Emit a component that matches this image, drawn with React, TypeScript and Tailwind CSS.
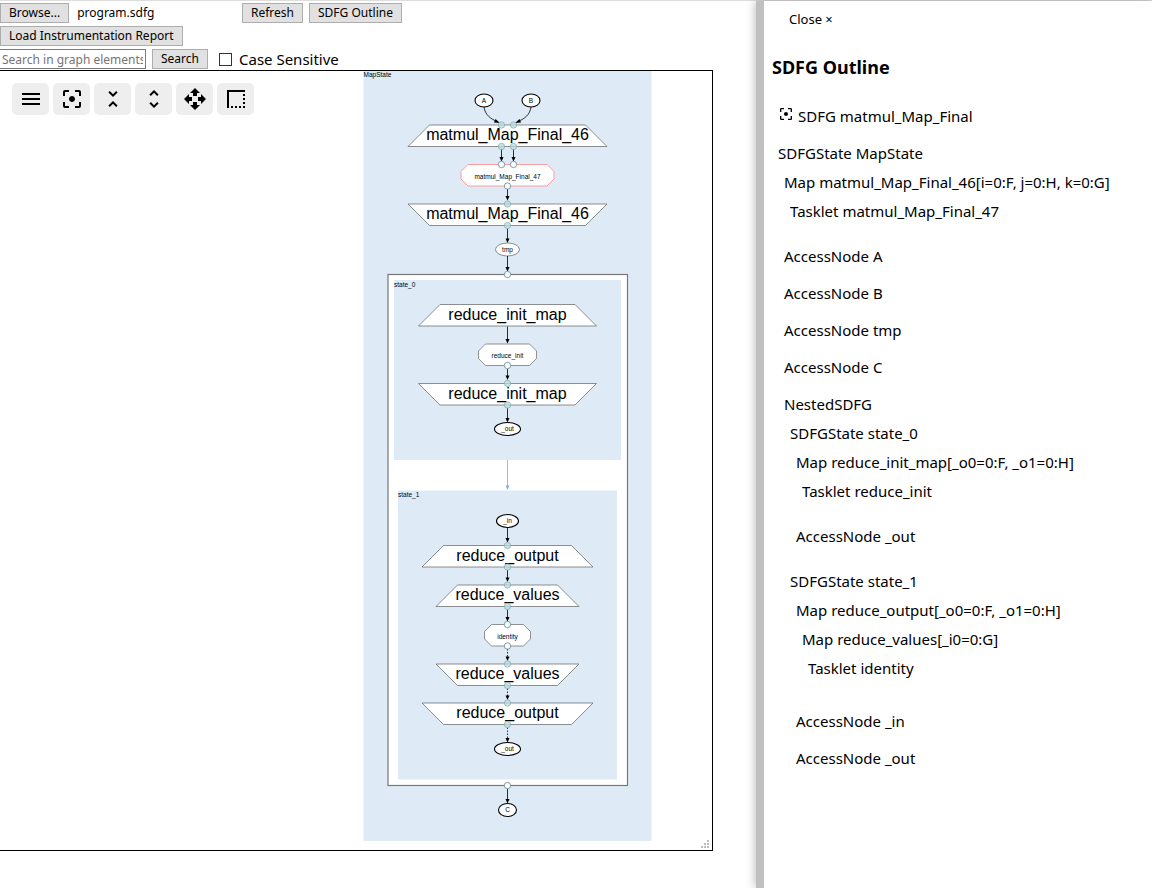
import { useRef } from "react";
import type { ReactNode } from "react";
import {
  MdBorderStyle,
  MdFilterCenterFocus,
  MdMenu,
  MdOpenWith,
  MdUnfoldLess,
  MdUnfoldMore,
} from "react-icons/md";

const CX = 1015;
const DEPTH = 43;

type MapProps = { y: number; wide: number; label: string; exit?: boolean };

function Port({ x = CX, y, solid = false }: { x?: number; y: number; solid?: boolean }) {
  return (
    <circle
      cx={x}
      cy={y}
      r={6.4}
      fill={solid ? "#f0ffff" : "#b9dbe0"}
      fillOpacity={solid ? 1 : 0.75}
      stroke={solid ? "#4d5c5e" : "#7d9da3"}
      strokeWidth={1.2}
    />
  );
}

function MapNode({ y, wide, label, exit = false }: MapProps) {
  const narrow = wide - DEPTH;
  const top = exit ? wide : narrow;
  const bottom = exit ? narrow : wide;
  return (
    <>
      <polygon
        points={`${CX - top},${y} ${CX + top},${y} ${CX + bottom},${y + DEPTH} ${CX - bottom},${y + DEPTH}`}
        fill="#fff"
        stroke="#555"
        strokeWidth={1.3}
      />
      <text x={CX} y={y + 30} fontSize={32} textAnchor="middle">
        {label}
      </text>
    </>
  );
}

function Tasklet({ y, half, label, stroke = "#666" }: { y: number; half: number; label: string; stroke?: string }) {
  const l = CX - half;
  const r = CX + half;
  const b = y + DEPTH;
  return (
    <>
      <polygon
        points={`${l + 14},${y} ${r - 14},${y} ${r},${y + 14} ${r},${b - 14} ${r - 14},${b} ${l + 14},${b} ${l},${b - 14} ${l},${y + 14}`}
        fill="#fff"
        stroke={stroke}
        strokeWidth={1.4}
      />
      <text x={CX} y={y + 28} fontSize={13} textAnchor="middle">
        {label}
      </text>
    </>
  );
}

function Access({ x = CX, y, rx, label, thin = false }: { x?: number; y: number; rx: number; label: string; thin?: boolean }) {
  return (
    <>
      <ellipse cx={x} cy={y} rx={rx} ry={13} fill="#fff" stroke={thin ? "#444" : "#000"} strokeWidth={thin ? 1.2 : 2.2} />
      <text x={x} y={y + 4} fontSize={13} textAnchor="middle">
        {label}
      </text>
    </>
  );
}

function Edge({ x = CX, from, to, dashed = false, color = "#000" }: { x?: number; from: number; to: number; dashed?: boolean; color?: string }) {
  return (
    <>
      <line x1={x} y1={from} x2={x} y2={to - 6} stroke={color} strokeWidth={1.6} strokeDasharray={dashed ? "3 3" : undefined} />
      <polygon points={`${x - 4},${to - 9} ${x + 4},${to - 9} ${x},${to}`} fill={color} />
    </>
  );
}

function Graph() {
  return (
    <svg
      viewBox="0 0 1424 1558"
      className="block h-auto w-full font-['Liberation_Sans',Arial,sans-serif]"
      role="img"
      aria-label="SDFG graph"
    >
      <rect x={727} y={0} width={576} height={1540} fill="#deebf7" />
      <text x={727} y={11} fontSize={13}>MapState</text>

      <Access x={968} y={59} rx={18} label="A" />
      <Access x={1062} y={59} rx={18} label="B" />
      <path d="M968 72 C970 88 982 96 994 101" fill="none" stroke="#000" strokeWidth={1.6} />
      <polygon points="991,96 1000,104 988,103" />
      <path d="M1062 72 C1060 88 1048 96 1036 101" fill="none" stroke="#000" strokeWidth={1.6} />
      <polygon points="1039,96 1030,104 1042,103" />

      <MapNode y={108} wide={199} label="matmul_Map_Final_46" />
      <Edge x={1003} from={156} to={181} />
      <Edge x={1027} from={156} to={181} />
      <Port x={1003} y={108} />
      <Port x={1027} y={108} />
      <Port x={1003} y={151} />
      <Port x={1027} y={151} />

      <Tasklet y={187} half={93} label="matmul_Map_Final_47" stroke="#f77" />
      <Port x={1003} y={187} solid />
      <Port x={1027} y={187} solid />
      <Edge from={236} to={259} />
      <Port y={230} solid />

      <MapNode y={266} wide={199} label="matmul_Map_Final_46" exit />
      <Port y={266} />
      <Edge from={315} to={344} />
      <Port y={309} />
      <Access y={357} rx={24} label="tmp" thin />

      <rect x={776} y={407} width={479} height={1022} fill="#fff" stroke="#777" strokeWidth={2.4} />
      <Edge from={370} to={401} />
      <Port y={407} solid />

      <rect x={788} y={418} width={454} height={360} fill="#deebf7" />
      <text x={788} y={431} fontSize={13}>state_0</text>
      <MapNode y={467} wide={178} label="reduce_init_map" />
      <Edge from={511} to={545} />
      <Tasklet y={546} half={58} label="reduce_init" />
      <Edge from={596} to={618} />
      <Port y={589} solid />
      <MapNode y={625} wide={178} label="reduce_init_map" exit />
      <Port y={625} />
      <Edge from={674} to={703} />
      <Port y={668} />
      <Access y={716} rx={26} label="_out" />

      <Edge from={778} to={838} color="#86add8" />

      <rect x={796} y={839} width={438} height={578} fill="#deebf7" />
      <text x={796} y={852} fontSize={13}>state_1</text>
      <Access y={900} rx={22} label="_in" />
      <Edge from={914} to={943} />
      <MapNode y={949} wide={171} label="reduce_output" />
      <Port y={949} />
      <Edge from={998} to={1022} />
      <Port y={992} />
      <MapNode y={1028} wide={143} label="reduce_values" />
      <Port y={1028} />
      <Edge from={1077} to={1101} />
      <Port y={1071} />
      <Tasklet y={1107} half={46} label="identity" />
      <Port y={1107} solid />
      <Edge from={1156} to={1180} dashed />
      <Port y={1150} solid />
      <MapNode y={1186} wide={143} label="reduce_values" exit />
      <Port y={1186} />
      <Edge from={1235} to={1258} dashed />
      <Port y={1229} />
      <MapNode y={1264} wide={171} label="reduce_output" exit />
      <Port y={1264} />
      <Edge from={1313} to={1343} dashed />
      <Port y={1307} />
      <Access y={1356} rx={26} label="_out" />

      <Edge from={1435} to={1465} />
      <Port y={1429} solid />
      <Access y={1478} rx={18} label="C" />
    </svg>
  );
}

/* ---------- Outline tree ---------- */

type Item = { label: string; children?: Item[] };

const outline: Item = {
  label: "SDFGState MapState",
  children: [
    {
      label: "Map matmul_Map_Final_46[i=0:F, j=0:H, k=0:G]",
      children: [{ label: "Tasklet matmul_Map_Final_47" }],
    },
    { label: "AccessNode A" },
    { label: "AccessNode B" },
    { label: "AccessNode tmp" },
    { label: "AccessNode C" },
    {
      label: "NestedSDFG",
      children: [
        {
          label: "SDFGState state_0",
          children: [
            { label: "Map reduce_init_map[_o0=0:F, _o1=0:H]", children: [{ label: "Tasklet reduce_init" }] },
            { label: "AccessNode _out" },
          ],
        },
        {
          label: "SDFGState state_1",
          children: [
            {
              label: "Map reduce_output[_o0=0:F, _o1=0:H]",
              children: [{ label: "Map reduce_values[_i0=0:G]", children: [{ label: "Tasklet identity" }] }],
            },
            { label: "AccessNode _in" },
            { label: "AccessNode _out" },
          ],
        },
      ],
    },
  ],
};

function OutlineItem({ item }: { item: Item }) {
  return (
    <li className="py-2 pl-[6px]">
      <div>{item.label}</div>
      {item.children && (
        <ul>
          {item.children.map((child) => (
            <OutlineItem key={child.label} item={child} />
          ))}
        </ul>
      )}
    </li>
  );
}

/* ---------- Controls ---------- */

function PushButton({ children, onClick }: { children: ReactNode; onClick?: () => void }) {
  return (
    <button
      type="button"
      onClick={onClick}
      className="h-5 shrink-0 border border-[#adadad] bg-[#e1e1e1] px-2 text-xs leading-[18px] whitespace-nowrap"
    >
      {children}
    </button>
  );
}

const tools = [
  { label: "Menu", Icon: MdMenu },
  { label: "Zoom to fit", Icon: MdFilterCenterFocus },
  { label: "Collapse all", Icon: MdUnfoldLess },
  { label: "Expand all", Icon: MdUnfoldMore },
  { label: "Move", Icon: MdOpenWith },
  { label: "Box select", Icon: MdBorderStyle },
];

export default function App() {
  const fileRef = useRef<HTMLInputElement>(null);
  return (
    <div className="flex min-h-screen border-t border-[#dddddd] bg-white font-['Noto_Sans','Open_Sans',sans-serif] text-black">
      <main className="min-w-0 flex-1">
        <div className="flex flex-col gap-[3px] pt-[2px] pb-px">
          <div className="flex items-center gap-[6px]">
            <div className="flex w-[236px] items-center gap-2">
              <PushButton onClick={() => fileRef.current?.click()}>Browse...</PushButton>
              <input ref={fileRef} type="file" aria-label="SDFG file" className="hidden" />
              <span className="text-xs leading-5">program.sdfg</span>
            </div>
            <PushButton>Refresh</PushButton>
            <PushButton>SDFG Outline</PushButton>
          </div>
          <div className="flex">
            <PushButton>Load Instrumentation Report</PushButton>
          </div>
          <div className="flex items-center gap-[6px]">
            <input
              type="text"
              aria-label="Search in graph elements"
              placeholder="Search in graph elements"
              className="h-5 w-[146px] border border-l-0 border-[#7a7a7a] px-[2px] text-xs placeholder:text-[#757575]"
            />
            <PushButton>Search</PushButton>
            <label className="ml-[5px] flex items-center gap-[7px] text-[15px] leading-[18px]">
              <input type="checkbox" className="size-[13px] appearance-none border border-[#333] bg-white checked:bg-[#333]" />
              Case Sensitive
            </label>
          </div>
        </div>

        <div className="relative mr-[43px] border border-l-0 border-black">
          <Graph />
          <div className="absolute top-3 left-3 flex gap-1">
            {tools.map(({ label, Icon }) => (
              <button
                key={label}
                type="button"
                aria-label={label}
                className="flex h-8 w-[37px] items-center justify-center rounded-[5px] bg-[#eeeeee]"
              >
                <Icon size={24} />
              </button>
            ))}
          </div>
          <svg width="10" height="10" viewBox="0 0 10 10" className="absolute right-[2px] bottom-[1px]" fill="#bdbdbd">
            <path d="M7 1h2v2h-2zM4 4h2v2h-2zM7 4h2v2h-2zM1 7h2v2h-2zM4 7h2v2h-2zM7 7h2v2h-2z" />
          </svg>
        </div>
      </main>

      <aside className="w-[396px] shrink-0 border-l-8 border-[#c0c0c0] bg-white pl-2 shadow-[0_0_10px_rgba(0,0,0,0.3)]">
        <button type="button" className="mt-2 ml-[17px] block text-[13px] leading-5">
          Close ×
        </button>
        <h2 className="mt-[26px] text-[18px] leading-6 font-bold">SDFG Outline</h2>
        <ul className="mt-[19px] text-[15px] leading-[21px]">
          <li className="flex items-start gap-1 py-2 pl-[6px]">
            <MdFilterCenterFocus size={16} />
            SDFG matmul_Map_Final
          </li>
          <OutlineItem item={outline} />
        </ul>
      </aside>
    </div>
  );
}
